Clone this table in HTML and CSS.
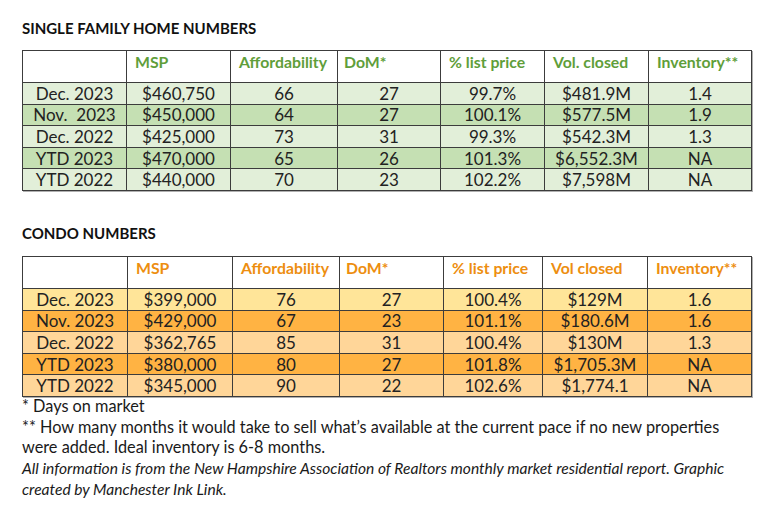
FILE: index.html
```html
<!DOCTYPE html>
<html>
<head>
<meta charset="utf-8">
<link rel="stylesheet" href="styles.css">
</head>
<body>
<div class="page">
  <h2 class="title title-sf">SINGLE FAMILY HOME NUMBERS</h2>
  <table class="data green">
    <colgroup>
      <col style="width:104px"><col style="width:104px"><col style="width:107px"><col style="width:103px"><col style="width:104px"><col style="width:104px"><col style="width:103px">
    </colgroup>
    <thead>
      <tr><th></th><th>MSP</th><th>Affordability</th><th>DoM*</th><th>% list price</th><th>Vol. closed</th><th>Inventory**</th></tr>
    </thead>
    <tbody>
      <tr class="a"><td>Dec. 2023</td><td>$460,750</td><td>66</td><td>27</td><td>99.7%</td><td>$481.9M</td><td>1.4</td></tr>
      <tr class="b"><td>Nov.&nbsp; 2023</td><td>$450,000</td><td>64</td><td>27</td><td>100.1%</td><td>$577.5M</td><td>1.9</td></tr>
      <tr class="a"><td>Dec. 2022</td><td>$425,000</td><td>73</td><td>31</td><td>99.3%</td><td>$542.3M</td><td>1.3</td></tr>
      <tr class="b"><td>YTD 2023</td><td>$470,000</td><td>65</td><td>26</td><td>101.3%</td><td>$6,552.3M</td><td>NA</td></tr>
      <tr class="a"><td>YTD 2022</td><td>$440,000</td><td>70</td><td>23</td><td>102.2%</td><td>$7,598M</td><td>NA</td></tr>
    </tbody>
  </table>

  <h2 class="title title-condo">CONDO NUMBERS</h2>
  <table class="data orange">
    <colgroup>
      <col style="width:105px"><col style="width:105px"><col style="width:107px"><col style="width:104px"><col style="width:99px"><col style="width:105px"><col style="width:104px">
    </colgroup>
    <thead>
      <tr><th></th><th>MSP</th><th>Affordability</th><th>DoM*</th><th>% list price</th><th>Vol closed</th><th>Inventory**</th></tr>
    </thead>
    <tbody>
      <tr class="y"><td>Dec. 2023</td><td>$399,000</td><td>76</td><td>27</td><td>100.4%</td><td>$129M</td><td>1.6</td></tr>
      <tr class="o"><td>Nov. 2023</td><td>$429,000</td><td>67</td><td>23</td><td>101.1%</td><td>$180.6M</td><td>1.6</td></tr>
      <tr class="p"><td>Dec. 2022</td><td>$362,765</td><td>85</td><td>31</td><td>100.4%</td><td>$130M</td><td>1.3</td></tr>
      <tr class="o"><td>YTD 2023</td><td>$380,000</td><td>80</td><td>27</td><td>101.8%</td><td>$1,705.3M</td><td>NA</td></tr>
      <tr class="p"><td>YTD 2022</td><td>$345,000</td><td>90</td><td>22</td><td>102.6%</td><td>$1,774.1</td><td>NA</td></tr>
    </tbody>
  </table>

  <div class="notes">
    <p>* Days on market</p>
    <p>** How many months it would take to sell what’s available at the current pace if no new properties were added. Ideal inventory is 6-8 months.</p>
    <p class="source">All information is from the New Hampshire Association of Realtors monthly market residential report. Graphic created by Manchester Ink Link.</p>
  </div>
</div>
</body>
</html>
```

FILE: styles.css
```css
html, body {
  margin: 0;
  padding: 0;
  background: #ffffff;
}

body {
  font-family: "Lato", "Open Sans", sans-serif;
  color: #1a1a1a;
}

.page {
  padding: 18px 0 0 22px;
  width: 722px;
}

.title {
  margin: 0;
  font-size: 15px;
  font-weight: 700;
  line-height: 20px;
  color: #111;
}

.title-sf {
  margin-bottom: 12px;
}

.title-condo {
  margin-top: 32px;
  margin-bottom: 13px;
}

.data {
  border-collapse: collapse;
  table-layout: fixed;
  width: 729px;
  border: 1px solid #5a5a5a;
  box-shadow: 1px 1px 0 #b0b0b0;
}

.data th,
.data td {
  border: 1px solid #3c3c3c;
  padding: 0;
  white-space: nowrap;
  overflow: hidden;
}

.data thead tr {
  height: 32px;
}

.data tbody tr {
  height: 21.6px;
}

.data th {
  vertical-align: top;
  text-align: left;
  padding: 1px 0 0 8px;
  font-size: 15.8px;
  font-weight: 700;
  line-height: 20px;
  background: #ffffff;
}

.data th:nth-child(4) {
  padding-left: 6px;
}

.data td {
  text-align: center;
  font-size: 17px;
  line-height: 19px;
  color: #222;
}

.green th { color: #5f9e3a; }
.green .a td { background: #e2efd9; }
.green .b td { background: #c5e0b3; }

.orange th { color: #ed8e10; }
.orange .y td { background: #ffe599; }
.orange .o td { background: #ffb343; }
.orange .p td { background: #ffd699; }

.notes {
  margin-top: -1px;
  font-size: 16.3px;
  line-height: 20.7px;
  color: #1a1a1a;
}

.notes p {
  margin: 0;
}

.notes .source {
  font-style: italic;
  font-size: 15.6px;
  line-height: 20.7px;
}
```
